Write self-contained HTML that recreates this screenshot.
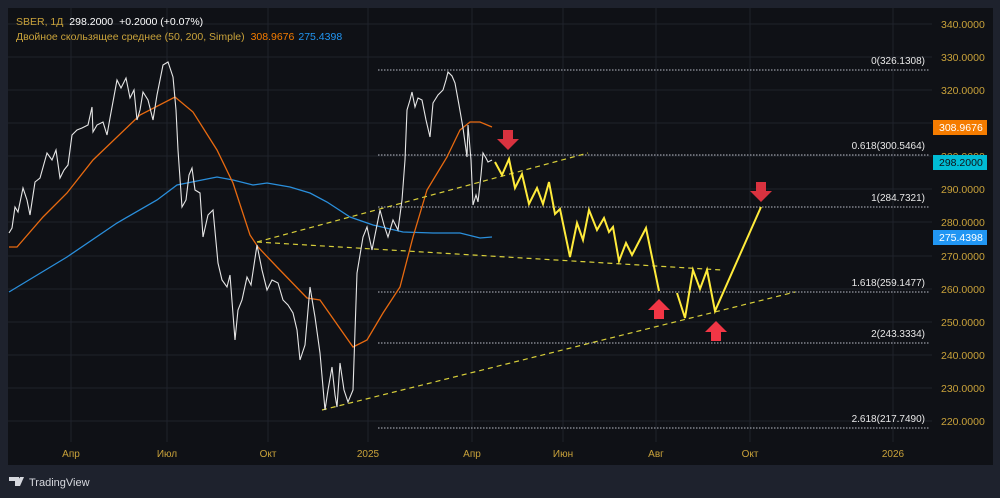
<!DOCTYPE html>
<html><head><meta charset="utf-8"><style>
html,body{margin:0;padding:0;background:#1e222d;width:1000px;height:498px;overflow:hidden;font-family:"Liberation Sans","DejaVu Sans",sans-serif}
</style></head><body>
<svg width="1000" height="498" xmlns="http://www.w3.org/2000/svg" style="position:absolute;left:0;top:0">
<rect x="0" y="0" width="1000" height="498" fill="#1e222d"/>
<rect x="8" y="8" width="985" height="457" fill="#0f1116"/>
<g stroke="#1f222b" stroke-width="1">
<line x1="8" y1="24" x2="932" y2="24"/><line x1="8" y1="57" x2="932" y2="57"/><line x1="8" y1="90" x2="932" y2="90"/><line x1="8" y1="123" x2="932" y2="123"/><line x1="8" y1="156" x2="932" y2="156"/><line x1="8" y1="189" x2="932" y2="189"/><line x1="8" y1="222" x2="932" y2="222"/><line x1="8" y1="256" x2="932" y2="256"/><line x1="8" y1="289" x2="932" y2="289"/><line x1="8" y1="322" x2="932" y2="322"/><line x1="8" y1="355" x2="932" y2="355"/><line x1="8" y1="388" x2="932" y2="388"/><line x1="8" y1="421" x2="932" y2="421"/>
<line x1="71" y1="8" x2="71" y2="442"/><line x1="167" y1="8" x2="167" y2="442"/><line x1="268" y1="8" x2="268" y2="442"/><line x1="368" y1="8" x2="368" y2="442"/><line x1="472" y1="8" x2="472" y2="442"/><line x1="563" y1="8" x2="563" y2="442"/><line x1="656" y1="8" x2="656" y2="442"/><line x1="750" y1="8" x2="750" y2="442"/><line x1="893" y1="8" x2="893" y2="442"/>
</g>
<g stroke="#b8bcc6" stroke-width="1" stroke-dasharray="1.5,1.5">
<line x1="378" y1="70" x2="930" y2="70"/><line x1="378" y1="155" x2="930" y2="155"/><line x1="378" y1="207" x2="930" y2="207"/><line x1="378" y1="292" x2="930" y2="292"/><line x1="378" y1="343" x2="930" y2="343"/><line x1="378" y1="428" x2="930" y2="428"/>
</g>
<g fill="#e8e8e8" font-size="10" text-anchor="end">
<text x="925" y="64">0(326.1308)</text><text x="925" y="149">0.618(300.5464)</text><text x="925" y="201">1(284.7321)</text><text x="925" y="286">1.618(259.1477)</text><text x="925" y="337">2(243.3334)</text><text x="925" y="422">2.618(217.7490)</text>
</g>
<polyline fill="none" stroke="#2a8fdc" stroke-width="1.3" points="9,292 67,257 117,223 157,200 177,185 217,177 233,180 253,185 267,183 290,187 310,193 327,202 350,217 373,225 403,232 433,233 460,233 480,238 492,237"/>
<polyline fill="none" stroke="#e86a10" stroke-width="1.3" points="9,247 17,247 43,217 67,193 93,160 140,115 175,97 193,112 217,150 233,183 250,235 258,247 277,267 307,298 320,300 353,347 367,340 383,313 400,287 413,237 427,190 447,157 460,130 470,122 480,122 492,127"/>
<g stroke="#d8cf3a" stroke-width="1.2" stroke-dasharray="5,4" fill="none">
<line x1="257" y1="242" x2="588" y2="153"/><line x1="257" y1="242" x2="722" y2="270"/><line x1="322" y1="410" x2="795" y2="292"/>
</g>
<polyline fill="none" stroke="#e6e6e6" stroke-width="1.1" points="9,233 12,228 15,207 18,212 23,188 27,200 30,215 35,182 40,178 47,153 52,160 56,150 60,178 64,170 68,165 72,135 77,130 82,128 88,125 92,107 93,132 97,125 103,122 107,135 110,118 117,80 121,88 126,78 130,98 134,90 137,120 140,110 143,92 148,100 153,120 157,95 163,65 168,62 173,77 176,110 178,150 182,207 186,200 189,175 192,168 195,190 200,193 203,237 208,215 213,210 218,263 222,280 227,287 230,275 235,340 238,310 242,300 247,277 251,285 257,245 262,270 267,290 272,280 278,283 283,300 288,305 293,313 297,330 300,360 305,345 310,287 315,317 320,353 325,410 328,390 332,367 335,395 337,407 340,363 344,390 348,402 353,390 357,273 360,255 363,237 367,227 372,250 376,230 380,210 384,225 388,237 393,220 398,230 402,200 405,160 407,110 410,100 412,92 415,107 418,98 422,100 426,120 430,137 433,103 438,95 443,90 446,80 448,72 452,76 455,83 459,105 463,128 467,157 468,125 471,160 473,205 476,195 478,202 481,175 483,153 486,158 488,162 492,160"/>
<polyline fill="none" stroke="#ffeb3b" stroke-width="2" stroke-linejoin="miter" points="495,162 502,175 509,159 515,188 522,174 529,204 537,188 543,204 549,182 555,214 560,209 570,257 577,223 583,240 589,210 597,230 604,218 609,232 613,227 619,261 626,243 632,255 646,228 659,291"/>
<polyline fill="none" stroke="#ffeb3b" stroke-width="2" points="677,293 685,318 693,270 700,289 707,270 715,311 761,207"/>
<g fill="#d9323f">
<path d="M503,130 h10 v9 h6 l-11,11 l-11,-11 h6z"/>
<path d="M756,182 h10 v9 h6 l-11,11 l-11,-11 h6z"/>
</g>
<g fill="#f23645">
<path d="M654,319 h10 v-9 h6 l-11,-11 l-11,11 h6z"/>
<path d="M711,341 h10 v-9 h6 l-11,-11 l-11,11 h6z"/>
</g>
<g fill="#c9a23a" font-size="10.5">
<text x="941" y="28">340.0000</text><text x="941" y="61">330.0000</text><text x="941" y="94">320.0000</text><text x="941" y="160">300.0000</text><text x="941" y="193">290.0000</text><text x="941" y="226">280.0000</text><text x="941" y="260">270.0000</text><text x="941" y="293">260.0000</text><text x="941" y="326">250.0000</text><text x="941" y="359">240.0000</text><text x="941" y="392">230.0000</text><text x="941" y="425">220.0000</text>
</g>
<rect x="933" y="120" width="54" height="15" fill="#f57c00"/><text x="939" y="131" fill="#fff" font-size="10.5">308.9676</text>
<rect x="933" y="155" width="54" height="15" fill="#00bcd4"/><text x="939" y="166" fill="#0f1116" font-size="10.5">298.2000</text>
<rect x="933" y="230" width="54" height="15" fill="#2196f3"/><text x="939" y="241" fill="#fff" font-size="10.5">275.4398</text>
<g fill="#c9a23a" font-size="10" text-anchor="middle">
<text x="71" y="457">Апр</text><text x="167" y="457">Июл</text><text x="268" y="457">Окт</text><text x="368" y="457">2025</text><text x="472" y="457">Апр</text><text x="563" y="457">Июн</text><text x="656" y="457">Авг</text><text x="750" y="457">Окт</text><text x="893" y="457">2026</text>
</g>
<text x="16" y="25" font-size="10.5" fill="#c9a23a">SBER, 1Д <tspan fill="#ffffff" dx="3">298.2000</tspan><tspan fill="#ffffff" dx="6">+0.2000 (+0.07%)</tspan></text>
<text x="16" y="40" font-size="10.5" fill="#c9a23a">Двойное скользящее среднее (50, 200, Simple) <tspan fill="#f57c00" dx="3">308.9676</tspan><tspan fill="#2196f3" dx="4">275.4398</tspan></text>
<g fill="#d6d8de"><path d="M9,477 h10 v9 h-4 v-5 h-6z"/><path d="M20,477 h4 l-4,9 h-3z"/><circle cx="18" cy="479" r="1.5"/></g>
<text x="29" y="486" font-size="11" fill="#d6d8de">TradingView</text>
</svg>
</body></html>
